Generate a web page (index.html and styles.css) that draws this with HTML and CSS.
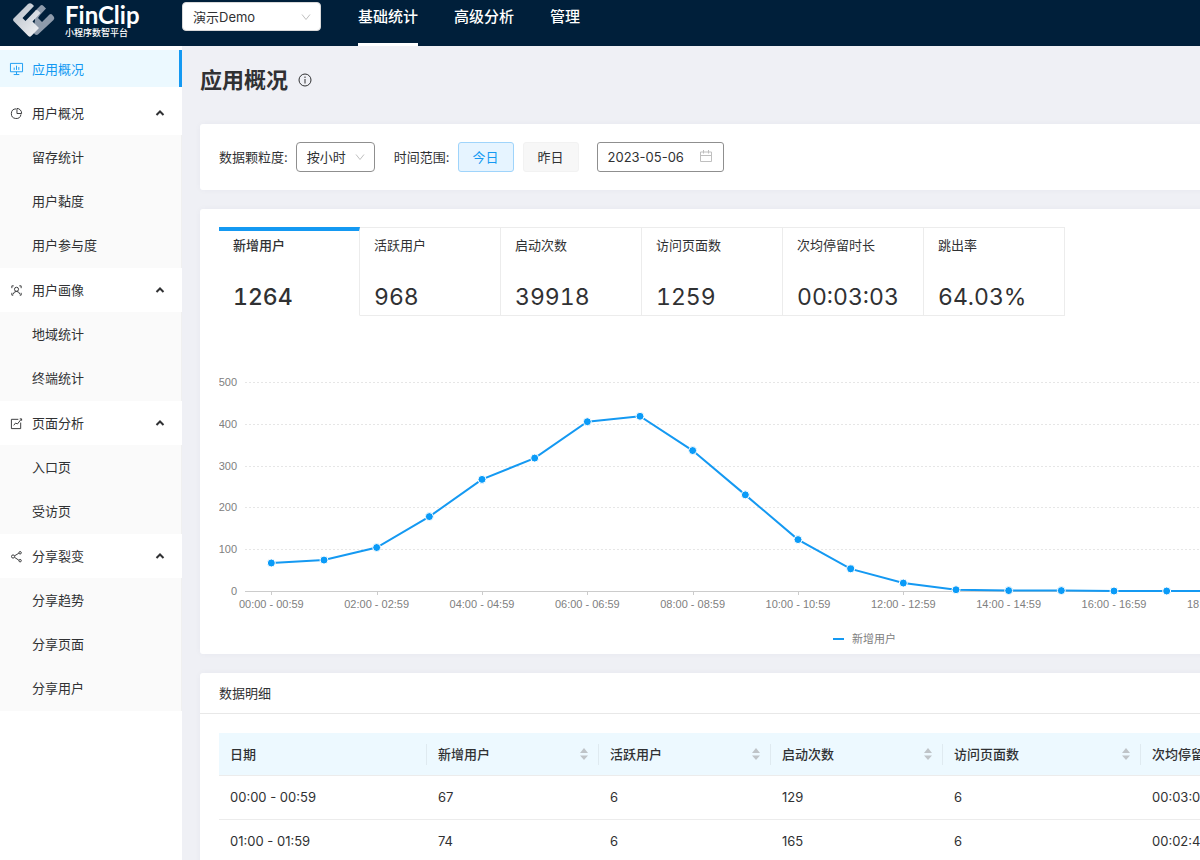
FILE: index.html
```html
<!DOCTYPE html>
<html lang="zh-CN">
<head>
  <meta charset="UTF-8" />
  <meta name="viewport" content="width=device-width, initial-scale=1" />
  <title>应用概况 - FinClip</title>
  <link rel="stylesheet" href="styles.css">
</head>
<body>
  <header class="topbar">
    <a class="brand" href="#">
      <svg class="brand-logo" viewBox="0 0 42 36" aria-hidden="true">
        <defs>
          <linearGradient id="logoLight" x1="0" y1="0" x2="1" y2="1">
            <stop offset="0" stop-color="#b4bcc6" />
            <stop offset="1" stop-color="#f4f5f7" />
          </linearGradient>
        </defs>
        <path fill="#8e9bab" d="M22 9 L27.500 3.500 Q29 2.500 30.500 4 L33 6.500 L27 13 L25 16 L29 20 L36.500 12.500 Q38 11.500 39 12.500 L41 15 Q41.800 16.500 40.500 18 L25.500 32 Q24 33.500 22 32.500 L20 30 L22 18 Z" />
        <path fill="url(#logoLight)" d="M0.500 16.500 L15 2 Q17 0.500 19 2 L21 4 L9.500 16 L12.500 19 L22.500 8.500 Q24 7.500 25 8.500 L27.500 11 L19.500 19.500 L26 26 L18.500 33.800 Q17 35.500 15.300 34 L1 19.500 Q-0.500 18 0.500 16.500 Z" />
      </svg>
      <span class="brand-text">
        <span class="brand-name">FinClip</span>
        <span class="brand-sub">小程序数智平台</span>
      </span>
    </a>
    <div class="select-box app-select">
      <select aria-label="应用">
        <option>演示Demo</option>
      </select>
      <svg class="chevron" viewBox="0 0 10 10" aria-hidden="true"><path d="M1 2.500 L5 7.500 L9 2.500" /></svg>
    </div>
    <nav class="top-nav" aria-label="主导航">
      <a class="active" href="#">基础统计</a>
      <a href="#">高级分析</a>
      <a href="#">管理</a>
    </nav>
  </header>

  <div class="layout">
    <aside class="sidebar">
      <a class="menu-single active" href="#">
        <svg class="menu-icon" viewBox="0 0 14 14" aria-hidden="true"><path d="M0.500 1.500 H13.500 V10.500 H0.500 Z M7 10.500 V13 M4 13.500 H10 M4.500 6 V8.500 M7 4 V8.500 M9.500 5.500 V8.500" /></svg>
        应用概况
      </a>

      <button class="menu-title" type="button" aria-expanded="true">
        <svg class="menu-icon" viewBox="0 0 14 14" aria-hidden="true"><path d="M6.500 2 A5.200 5.200 0 1 0 11.800 8 M7.500 1.500 V7 H12.500 A5.200 5.200 0 0 0 7.500 1.500 Z" /></svg>
        用户概况
        <svg class="arrow" viewBox="0 0 10 8" aria-hidden="true"><path d="M1.500 6 L5 2.500 L8.500 6" /></svg>
      </button>
      <ul class="submenu">
        <li><a href="#">留存统计</a></li>
        <li><a href="#">用户黏度</a></li>
        <li><a href="#">用户参与度</a></li>
      </ul>

      <button class="menu-title" type="button" aria-expanded="true">
        <svg class="menu-icon" viewBox="0 0 14 14" aria-hidden="true"><path d="M4 2 H2 V4.500 M10 2 H12 V4.500 M2 9.500 V12 H3.500 M12 9.500 V12 H10.500 M9.200 5.700 A2.200 2.200 0 1 1 4.800 5.700 A2.200 2.200 0 1 1 9.200 5.700 M3.500 11 Q4 8 7 8 Q10 8 10.500 11" /></svg>
        用户画像
        <svg class="arrow" viewBox="0 0 10 8" aria-hidden="true"><path d="M1.500 6 L5 2.500 L8.500 6" /></svg>
      </button>
      <ul class="submenu">
        <li><a href="#">地域统计</a></li>
        <li><a href="#">终端统计</a></li>
      </ul>

      <button class="menu-title" type="button" aria-expanded="true">
        <svg class="menu-icon" viewBox="0 0 14 14" aria-hidden="true"><path d="M9 2.500 H1.500 V12.500 H11.500 V6 M4 9 L6 6.500 L8 7.500 L12 2.500 M10.500 2 H12.500 V4" /></svg>
        页面分析
        <svg class="arrow" viewBox="0 0 10 8" aria-hidden="true"><path d="M1.500 6 L5 2.500 L8.500 6" /></svg>
      </button>
      <ul class="submenu">
        <li><a href="#">入口页</a></li>
        <li><a href="#">受访页</a></li>
      </ul>

      <button class="menu-title" type="button" aria-expanded="true">
        <svg class="menu-icon" viewBox="0 0 14 14" aria-hidden="true"><path d="M5 6.200 L9.500 3.500 M5 8 L9.500 11 M5 7 A1.700 1.700 0 1 1 1.600 7 A1.700 1.700 0 1 1 5 7 M12.200 3 A1.300 1.300 0 1 1 9.600 3 A1.300 1.300 0 1 1 12.200 3 M12.200 11.500 A1.300 1.300 0 1 1 9.600 11.500 A1.300 1.300 0 1 1 12.200 11.500" /></svg>
        分享裂变
        <svg class="arrow" viewBox="0 0 10 8" aria-hidden="true"><path d="M1.500 6 L5 2.500 L8.500 6" /></svg>
      </button>
      <ul class="submenu">
        <li><a href="#">分享趋势</a></li>
        <li><a href="#">分享页面</a></li>
        <li><a href="#">分享用户</a></li>
      </ul>
    </aside>

    <main class="content">
      <h1 class="page-title">
        应用概况
        <svg class="info-icon" viewBox="0 0 14 14" aria-hidden="true"><circle cx="7" cy="7" r="6" /><path d="M7 6 V10.500 M7 3.500 V5" /></svg>
      </h1>

      <section class="card filters">
        <label for="granularity">数据颗粒度:</label>
        <div class="select-box">
          <select id="granularity">
            <option>按小时</option>
            <option>按天</option>
          </select>
          <svg class="chevron" viewBox="0 0 10 10" aria-hidden="true"><path d="M1 2.500 L5 7.500 L9 2.500" /></svg>
        </div>
        <label class="range-label" for="date">时间范围:</label>
        <button class="day-btn active" type="button">今日</button>
        <button class="day-btn" type="button">昨日</button>
        <div class="date-box">
          <input type="text" id="date" value="2023-05-06">
          <svg class="calendar" viewBox="0 0 12 12" aria-hidden="true"><path d="M0.500 2 H11.500 V11.500 H0.500 Z M0.500 5.500 H11.500 M3.500 0 V3.500 M8.500 0 V3.500" /></svg>
        </div>
      </section>

      <section class="card overview">
        <div class="stats">
          <button class="stat active" type="button"><span class="stat-name">新增用户</span><span class="stat-value">1264</span></button>
          <button class="stat" type="button"><span class="stat-name">活跃用户</span><span class="stat-value">968</span></button>
          <button class="stat" type="button"><span class="stat-name">启动次数</span><span class="stat-value">39918</span></button>
          <button class="stat" type="button"><span class="stat-name">访问页面数</span><span class="stat-value">1259</span></button>
          <button class="stat" type="button"><span class="stat-name">次均停留时长</span><span class="stat-value">00:03:03</span></button>
          <button class="stat" type="button"><span class="stat-name">跳出率</span><span class="stat-value">64.03%</span></button>
        </div>
        <svg class="chart" id="chart" role="img" aria-label="新增用户"></svg>
      </section>

      <section class="card detail">
        <h2 class="detail-title">数据明细</h2>
        <div class="detail-body">
          <table class="detail-table">
            <colgroup>
              <col class="col-date"><col class="col-num"><col class="col-num"><col class="col-num"><col class="col-pages"><col><col>
            </colgroup>
            <thead>
              <tr>
                <th>日期</th>
                <th><button type="button">新增用户<svg viewBox="0 0 8 12" aria-hidden="true"><path d="M0 5 L4 0 L8 5 Z M0 7.500 H8 L4 12 Z" /></svg></button></th>
                <th><button type="button">活跃用户<svg viewBox="0 0 8 12" aria-hidden="true"><path d="M0 5 L4 0 L8 5 Z M0 7.500 H8 L4 12 Z" /></svg></button></th>
                <th><button type="button">启动次数<svg viewBox="0 0 8 12" aria-hidden="true"><path d="M0 5 L4 0 L8 5 Z M0 7.500 H8 L4 12 Z" /></svg></button></th>
                <th><button type="button">访问页面数<svg viewBox="0 0 8 12" aria-hidden="true"><path d="M0 5 L4 0 L8 5 Z M0 7.500 H8 L4 12 Z" /></svg></button></th>
                <th><button type="button">次均停留时长<svg viewBox="0 0 8 12" aria-hidden="true"><path d="M0 5 L4 0 L8 5 Z M0 7.500 H8 L4 12 Z" /></svg></button></th>
                <th><button type="button">跳出率<svg viewBox="0 0 8 12" aria-hidden="true"><path d="M0 5 L4 0 L8 5 Z M0 7.500 H8 L4 12 Z" /></svg></button></th>
              </tr>
            </thead>
            <tbody>
              <tr><td>00:00 - 00:59</td><td>67</td><td>6</td><td>129</td><td>6</td><td>00:03:02</td><td>64.10%</td></tr>
              <tr><td>01:00 - 01:59</td><td>74</td><td>6</td><td>165</td><td>6</td><td>00:02:45</td><td>63.82%</td></tr>
            </tbody>
          </table>
        </div>
      </section>
    </main>
  </div>

  <script src="chart.js"></script>
</body>
</html>
```

FILE: styles.css
```css
:root {
  --navy: #001f3a;
  --blue: #1499f2;
  --page-bg: #eff0f5;
  --text: #303133;
  --line: #ececec;
}
* {
  box-sizing: border-box;
}
body {
  margin: 0;
  min-height: 100vh;
  overflow-x: hidden;
  display: flex;
  flex-direction: column;
  background: var(--page-bg);
  color: var(--text);
  font-family: Inter, "Noto Sans CJK SC", sans-serif;
  font-size: 13px;
  line-height: 20px;
}
a {
  color: inherit;
  text-decoration: none;
}
button, select, input {
  font: inherit;
  color: inherit;
}
button {
  padding: 0;
  border: none;
  background: none;
  cursor: pointer;
}

/* Top bar */
.topbar {
  display: flex;
  height: 46px;
  background: var(--navy);
  color: #fff;
}
.brand {
  display: flex;
  gap: 10px;
  width: 182px;
  padding: 2px 0 0 13px;
}
.brand-logo {
  width: 42px;
  height: 36px;
}
.brand-text {
  display: flex;
  flex-direction: column;
}
.brand-name {
  font-family: Lato, sans-serif;
  font-size: 24px;
  font-weight: 700;
  line-height: 26px;
}
.brand-sub {
  font-size: 9px;
  font-weight: 500;
  line-height: 9px;
}
.select-box {
  position: relative;
  height: 30px;
}
.select-box select {
  width: 100%;
  height: 100%;
  padding: 0 10px;
  border: 1px solid #8f8f8f;
  border-radius: 4px;
  background: #fff;
  color: var(--text);
  appearance: none;
}
.chevron {
  position: absolute;
  right: 10px;
  top: 10px;
  width: 10px;
  height: 10px;
  fill: none;
  stroke: #bfbfbf;
  pointer-events: none;
}
.app-select {
  width: 139px;
  height: 29px;
  margin-top: 2px;
}
.app-select select {
  border-color: #d9d9d9;
}
.top-nav {
  display: flex;
  gap: 36px;
  margin-left: 37px;
  font-size: 15px;
  font-weight: 500;
}
.top-nav a {
  padding-top: 7px;
  border-bottom: 3px solid transparent;
}
.top-nav a.active {
  border-bottom-color: #fff;
}

/* Sidebar */
.layout {
  display: flex;
  flex: 1;
}
.sidebar {
  flex: none;
  width: 182px;
  padding-top: 4px;
  background: #fff;
}
.menu-single, .menu-title {
  display: flex;
  align-items: center;
  gap: 9px;
  width: 100%;
  padding: 0 17px 0 10px;
}
.menu-single {
  height: 37px;
  margin-bottom: 4px;
  border-right: 3px solid var(--blue);
  background: #ecf9ff;
  color: var(--blue);
}
.menu-title {
  height: 44px;
}
.menu-icon {
  width: 13px;
  height: 13px;
  fill: none;
  stroke: currentColor;
  overflow: visible;
}
.arrow {
  width: 10px;
  height: 8px;
  margin-left: auto;
  fill: none;
  stroke: #303133;
  stroke-width: 2;
}
.submenu {
  margin: 0;
  padding: 0 0 1px;
  list-style: none;
  background: #fafafa;
  border-right: 1px solid #f0f0f0;
}
.submenu a {
  display: block;
  padding: 0 32px;
  line-height: 44px;
}

/* Content */
.content {
  flex: 1;
  min-width: 1364px;
  padding: 18px;
  display: flex;
  flex-direction: column;
  gap: 19px;
}
.page-title {
  display: flex;
  align-items: center;
  gap: 10px;
  margin: 0 0 9px;
  font-size: 22px;
  font-weight: 600;
  line-height: 32px;
}
.info-icon {
  width: 14px;
  height: 14px;
  fill: none;
  stroke: #303133;
}
.card {
  padding: 18px 19px;
  border-radius: 3px;
  background: #fff;
  box-shadow: 0 0 6px rgba(40, 60, 100, 0.04);
}
.filters {
  display: flex;
  align-items: center;
}
.filters label {
  margin-right: 8px;
}
.filters .select-box {
  width: 79px;
}
.filters .range-label {
  margin-left: 19px;
}
.day-btn {
  width: 56px;
  height: 30px;
  margin-right: 9px;
  border: 1px solid #f2f2f2;
  border-radius: 3px;
  background: #f7f7f7;
}
.day-btn.active {
  border-color: #9fd4fb;
  background: #e6f4ff;
  color: var(--blue);
}
.date-box {
  position: relative;
  width: 127px;
  height: 30px;
  margin-left: 9px;
}
.date-box input {
  width: 100%;
  height: 100%;
  padding: 0 10px;
  border: 1px solid #8f8f8f;
  border-radius: 3px;
}
.calendar {
  position: absolute;
  right: 12px;
  top: 8px;
  width: 12px;
  height: 12px;
  fill: none;
  stroke: #bfbfbf;
}

/* Stats and chart */
.overview {
  padding-bottom: 0;
}
.stats {
  display: flex;
}
.stat {
  display: flex;
  flex-direction: column;
  justify-content: space-between;
  width: 141px;
  height: 89px;
  padding: 7px 14px 4px;
  border: solid var(--line);
  border-width: 1px 1px 1px 0;
  text-align: left;
}
.stat.active {
  padding-top: 4px;
  border-top: 4px solid var(--blue);
  border-bottom-color: transparent;
  font-weight: 500;
}
.stat-value {
  font-size: 23px;
  font-variant-numeric: tabular-nums;
  line-height: 28px;
}
.chart {
  display: block;
  width: 100%;
  height: 338px;
  font-family: "Liberation Sans", "Noto Sans CJK SC", sans-serif;
  font-size: 11px;
}
.chart text {
  fill: #808080;
}
.chart .grid {
  stroke: #e6e6e6;
  stroke-dasharray: 2 2;
}
.chart .axis {
  stroke: #ccc;
}
.chart .series {
  fill: none;
  stroke: var(--blue);
  stroke-width: 2;
}
.chart .dot {
  fill: #0a9bf8;
  stroke: #fff;
}
.chart .legend {
  font-family: "Noto Sans CJK SC", sans-serif;
}

/* Detail table */
.detail {
  padding: 0;
}
.detail-title {
  margin: 0;
  padding: 10px 19px;
  border-bottom: 1px solid #e8e8e8;
  font-size: 13px;
  font-weight: 400;
}
.detail-body {
  padding: 19px;
}
.detail-table {
  width: 100%;
  table-layout: fixed;
  border-collapse: separate;
  border-spacing: 0;
}
.col-date {
  width: 208px;
}
.col-num {
  width: 172px;
}
.col-pages {
  width: 198px;
}
.detail-table th, .detail-table td {
  position: relative;
  padding: 11px 11px 12px;
  border-bottom: 1px solid var(--line);
  text-align: left;
}
.detail-table th {
  padding: 11px;
  background: #edf9ff;
  font-weight: 500;
}
.detail-table th:not(:last-child)::after {
  content: "";
  position: absolute;
  right: 0;
  top: 11px;
  width: 1px;
  height: 21px;
  background: #dfeaf0;
}
.detail-table th button {
  display: flex;
  align-items: center;
  justify-content: space-between;
  width: 100%;
}
.detail-table th svg {
  width: 8px;
  height: 12px;
  fill: #bfc4c8;
}
```

FILE: chart.js
```javascript
const chart = document.getElementById('chart');
const values = [67, 74, 104, 178, 267, 318, 405, 418, 336, 230, 123, 53, 19, 3, 1, 1, 0, 0, 0, 0, 0, 0, 0, 0];
const plot = { left: 26, top: 66, bottom: 275 };
const maxValue = 500;

function add(name, attrs, text) {
  const el = document.createElementNS('http://www.w3.org/2000/svg', name);
  for (const key in attrs) el.setAttribute(key, attrs[key]);
  if (text) el.textContent = text;
  chart.appendChild(el);
}

function drawChart() {
  chart.innerHTML = '';
  const width = chart.clientWidth || chart.getBoundingClientRect().width;
  const slot = (width - plot.left) / values.length;
  const x = i => plot.left + slot * (i + 0.5);
  const y = v => plot.bottom - (v / maxValue) * (plot.bottom - plot.top);

  // Grid lines and y labels
  for (let v = 0; v <= maxValue; v += 100) {
    const lineY = Math.round(y(v)) + 0.5;
    add('line', { class: v ? 'grid' : 'axis', x1: plot.left, x2: width, y1: lineY, y2: lineY });
    add('text', { x: plot.left - 8, y: Math.round(y(v)) + 4, 'text-anchor': 'end' }, String(v));
  }

  // Ticks and hour labels, every second slot
  for (let i = 0; i < values.length; i += 2) {
    const hour = String(i).padStart(2, '0');
    const tickX = Math.round(x(i)) + 0.5;
    add('line', { class: 'axis', x1: tickX, x2: tickX, y1: plot.bottom, y2: plot.bottom + 4 });
    add('text', { x: x(i), y: plot.bottom + 17, 'text-anchor': 'middle' }, `${hour}:00 - ${hour}:59`);
  }

  add('polyline', { class: 'series', points: values.map((v, i) => `${x(i)},${y(v)}`).join(' ') });
  values.forEach((v, i) => add('circle', { class: 'dot', cx: x(i), cy: y(v), r: 4 }));

  // Legend
  const middle = width / 2;
  add('line', { class: 'series', x1: middle - 31, x2: middle - 20, y1: 323, y2: 323 });
  add('text', { class: 'legend', x: middle - 12, y: 327 }, '新增用户');
}

drawChart();
window.addEventListener('resize', drawChart);
```
